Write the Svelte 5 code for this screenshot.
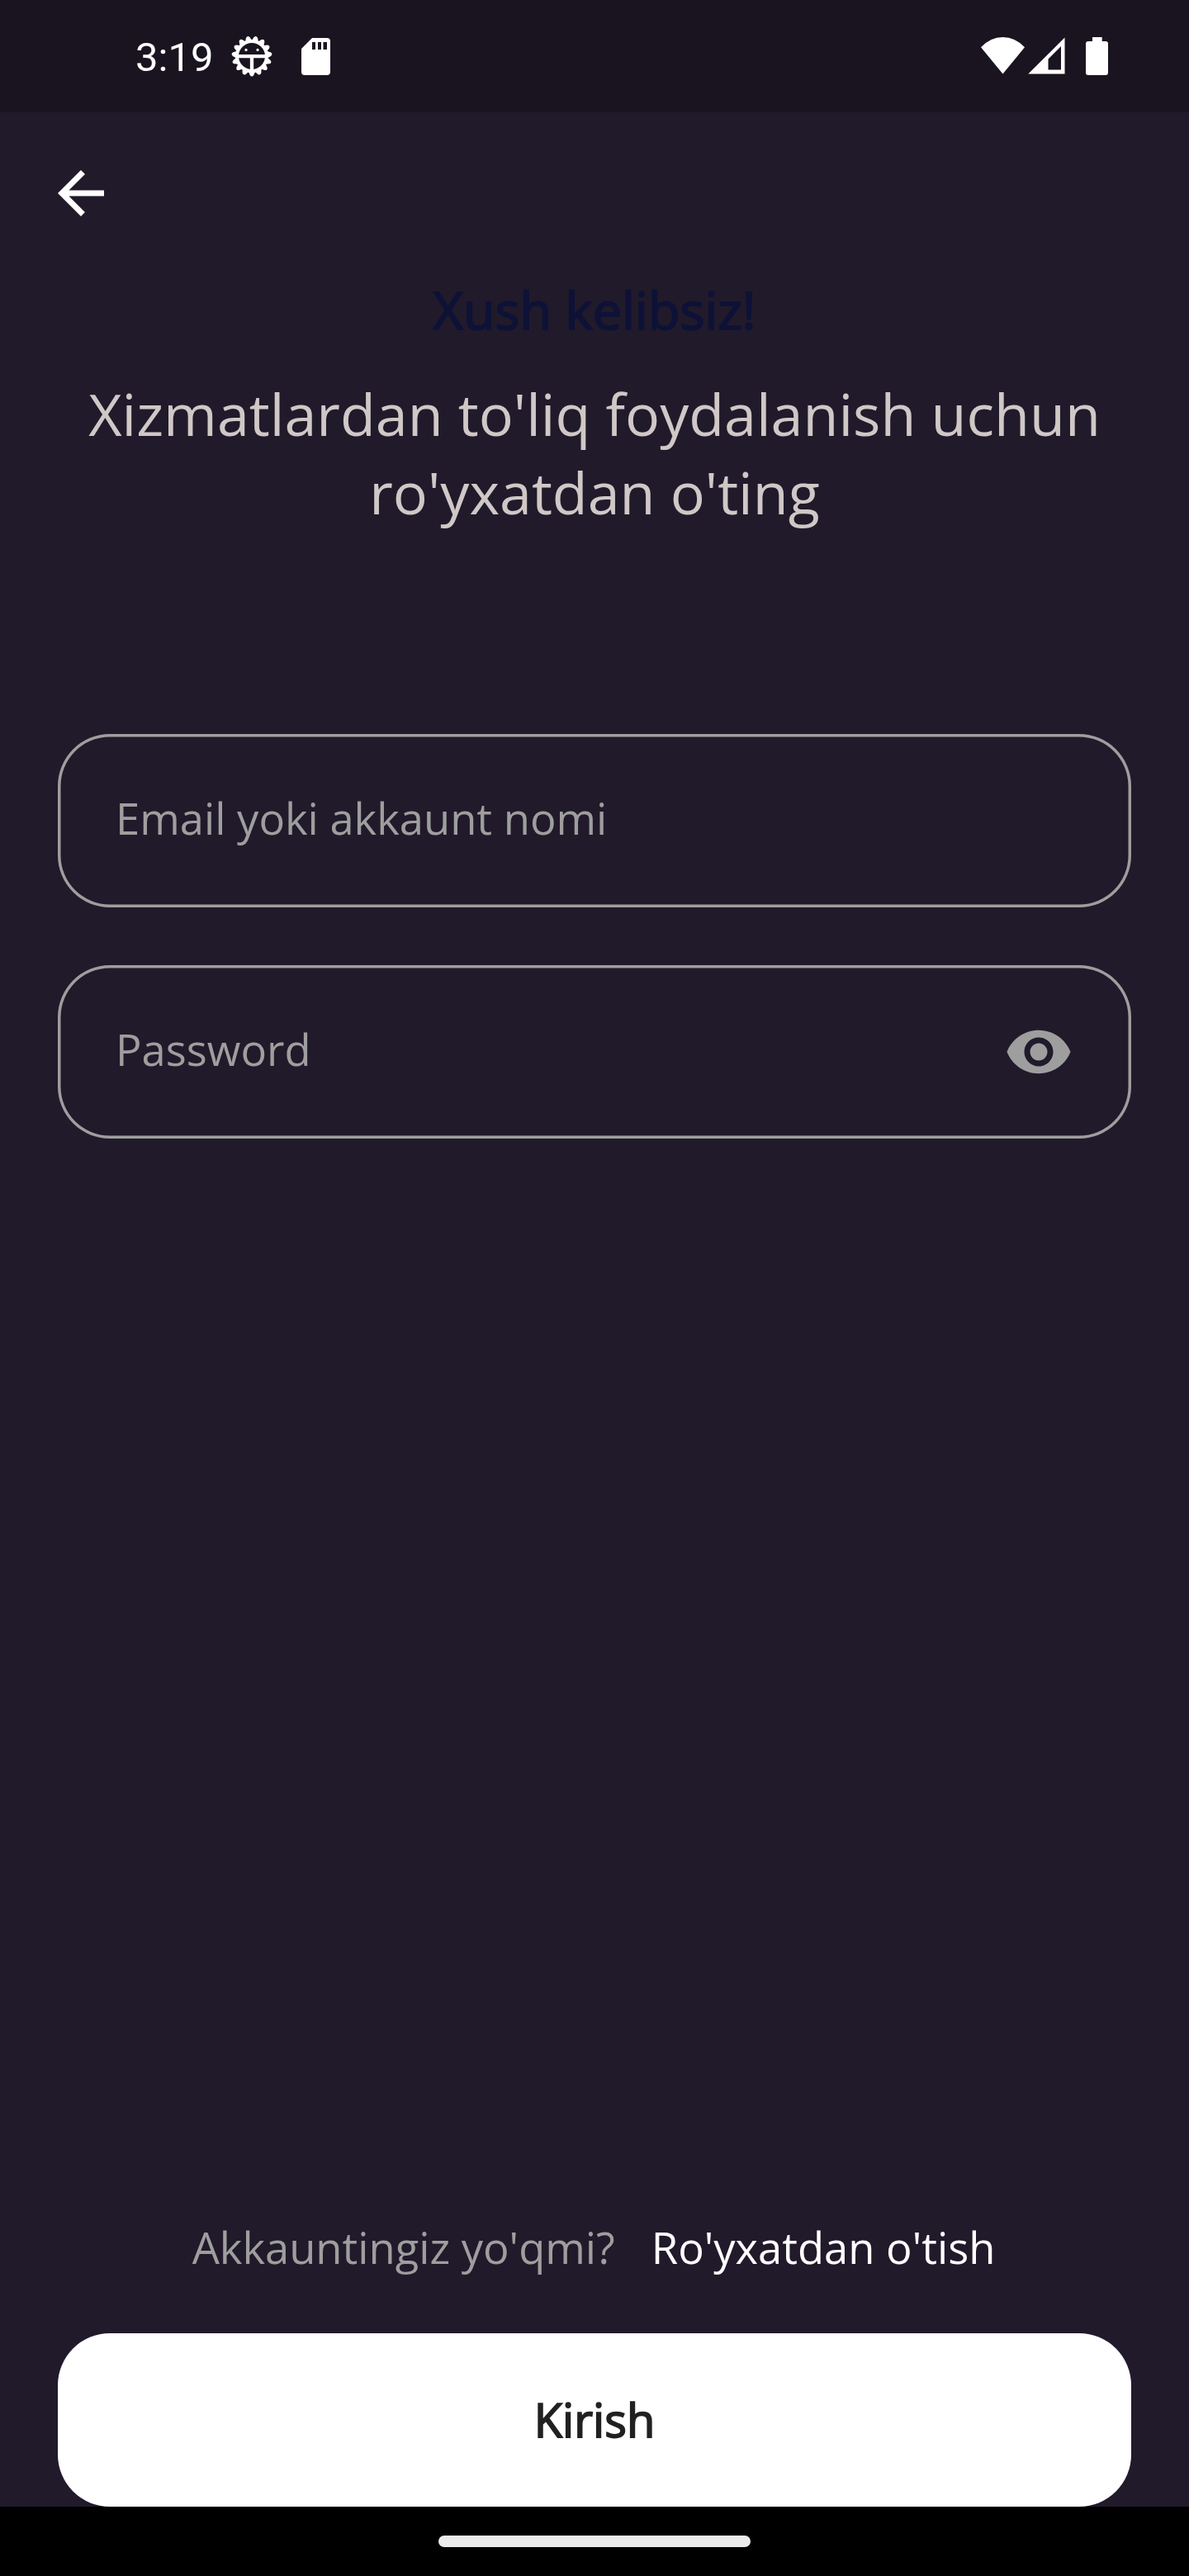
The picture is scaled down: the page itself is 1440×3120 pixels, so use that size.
<script>
  let login = $state('');
  let password = $state('');

  // Fifteen rounded teeth spread evenly round the gear, one pointing straight down
  const teeth = Array.from({ length: 15 }, (_, i) => 180 + i * 24);
</script>

<div class="screen">
  <header class="status">
    <div class="status-left">
      <span class="clock">3:19</span>
      <svg class="gear" viewBox="-25 -25 50 50">
        {#each teeth as angle}
          <path d="M-4.400-18 L-2.300-23 Q0-26 2.300-23 L4.400-18Z" fill="#fff" transform="rotate({angle})" />
        {/each}
        <circle r="18" fill="none" stroke="#fff" stroke-width="4" />
        <path d="M-17 .2H17M0 0V17" fill="none" stroke="#fff" stroke-width="4.300" />
        <circle cx="-7" cy="-7.600" r="1.600" fill="#fff" />
        <circle cx="7" cy="-7.600" r="1.600" fill="#fff" />
      </svg>
      <svg class="sd" viewBox="0 0 35 45">
        <path fill="#fff" fill-rule="evenodd" d="M13 0H31Q35 0 35 4V41Q35 45 31 45H4Q0 45 0 41V13ZM13 5V14H17V5ZM20 5V14H24V5ZM26.500 5V14H31V5Z" />
      </svg>
    </div>
    <div class="status-right">
      <svg class="wifi" viewBox="0 0 53 45"><path fill="#fff" d="M0 12.300Q11.500 0 26.500 0T53 12.300L26.500 44.500Z" /></svg>
      <svg class="signal" viewBox="0 0 45 45"><path fill="#fff" fill-rule="evenodd" d="M44.500 .5V44.500H.3ZM40 11L24.500 26.500V39.500H40Z" /></svg>
      <svg class="battery" viewBox="0 0 27 46"><path fill="#fff" d="M8 0H19.700V5H24Q27 5 27 8V43Q27 46 24 46H3Q0 46 0 43V8Q0 5 3 5H8Z" /></svg>
    </div>
  </header>

  <nav class="toolbar">
    <button class="icon-button" aria-label="Orqaga">
      <svg viewBox="0 0 24 24"><path fill="#fff" d="M20 11H7.830l5.590-5.590L12 4l-8 8 8 8 1.410-1.410L7.830 13H20v-2z" /></svg>
    </button>
  </nav>

  <main>
    <h1>Xush kelibsiz!</h1>
    <p class="subtitle">Xizmatlardan to'liq foydalanish uchun ro'yxatdan o'ting</p>

    <form>
      <label class="field">
        <input type="text" placeholder="Email yoki akkaunt nomi" bind:value={login} />
      </label>
      <label class="field">
        <input type="password" placeholder="Password" bind:value={password} />
        <svg class="eye" viewBox="0 0 24 24">
          <path fill="#9e9e9e" d="M12 4.500C7 4.500 2.730 7.610 1 12c1.730 4.390 6 7.500 11 7.500s9.270-3.110 11-7.500c-1.730-4.390-6-7.500-11-7.500zM12 17c-2.760 0-5-2.240-5-5s2.240-5 5-5 5 2.240 5 5-2.240 5-5 5zm0-8c-1.660 0-3 1.340-3 3s1.340 3 3 3 3-1.340 3-3-1.340-3-3-3z" />
        </svg>
      </label>
    </form>

    <div class="actions">
      <div class="signup">
        <span>Akkauntingiz yo'qmi?</span>
        <a href="#signup">Ro'yxatdan o'tish</a>
      </div>
      <button class="submit">Kirish</button>
    </div>
  </main>

  <footer class="gesture-bar"><div class="pill"></div></footer>
</div>

<style>
  :global(body) {
    margin: 0;
    background: #211a2b;
  }
  .screen {
    box-sizing: border-box;
    width: 1440px;
    height: 3120px;
    display: flex;
    flex-direction: column;
    background: #211a2b;
    font-family: 'Open Sans', 'Noto Sans', sans-serif;
    overflow: hidden;
  }
  svg {
    display: block;
    flex: none;
  }
  button {
    border: 0;
    padding: 0;
    font: inherit;
  }
  .status {
    box-sizing: border-box;
    height: 136px;
    flex: none;
    display: flex;
    justify-content: space-between;
    align-items: flex-start;
    padding: 43px 98px 0 164px;
    background: #1a1420;
  }
  .status-left,
  .status-right {
    display: flex;
    align-items: flex-start;
  }
  .clock {
    width: 116px;
    padding-top: 1px;
    font: 49px/52px Roboto, sans-serif;
    color: #fff;
    white-space: nowrap;
  }
  .gear {
    width: 50px;
    height: 50px;
  }
  .sd {
    width: 35px;
    height: 45px;
    margin: 3px 0 0 35px;
  }
  .wifi {
    width: 53px;
    height: 45px;
    margin-top: 2px;
  }
  .signal {
    width: 45px;
    height: 45px;
    margin: 2px 25px 0 4px;
  }
  .battery {
    width: 27px;
    height: 46px;
    margin-top: 2px;
  }
  .toolbar {
    box-sizing: border-box;
    height: 196px;
    flex: none;
    display: flex;
    align-items: center;
    padding-left: 56px;
  }
  .icon-button {
    width: 84px;
    height: 84px;
    background: none;
  }
  main {
    flex: 1;
    display: flex;
    flex-direction: column;
    padding: 0 70px;
  }
  h1 {
    margin: 0;
    font-size: 63px;
    line-height: 86px;
    font-weight: 400;
    text-align: center;
    color: #0e1237;
    -webkit-text-stroke: 2px #0e1237;
  }
  .subtitle {
    margin: 36px 0 0;
    font-size: 70px;
    line-height: 95px;
    text-align: center;
    color: #d0c8c6;
  }
  form {
    display: flex;
    flex-direction: column;
    gap: 70px;
    margin-top: 244.500px;
  }
  .field {
    box-sizing: border-box;
    height: 210px;
    display: flex;
    align-items: center;
    padding: 0 70px;
    border-radius: 63px;
    box-shadow: inset 0 0 0 3.500px #9e9e9e;
  }
  input {
    flex: 1;
    min-width: 0;
    height: 72px;
    margin: 0 0 6px;
    padding: 0;
    border: 0;
    outline: 0;
    background: none;
    font: 52.500px/72px 'Open Sans', 'Noto Sans', sans-serif;
    color: #fff;
  }
  input::placeholder {
    color: #9e9e9e;
    opacity: 1;
  }
  .eye {
    width: 84px;
    height: 84px;
  }
  .actions {
    display: flex;
    flex-direction: column;
    gap: 69px;
    margin-top: auto;
  }
  .signup {
    display: flex;
    justify-content: center;
    gap: 44px;
    padding-right: 2px;
    font-size: 52.500px;
    line-height: 71px;
    color: #9e9e9e;
    white-space: nowrap;
  }
  .signup a {
    color: #fff;
    text-decoration: none;
  }
  .submit {
    height: 210px;
    padding-bottom: 2px;
    border-radius: 63px;
    background: #fff;
    font-size: 56px;
    line-height: 76px;
    color: #212121;
    -webkit-text-stroke: 1.750px #212121;
  }
  .gesture-bar {
    height: 84px;
    flex: none;
    display: flex;
    align-items: center;
    justify-content: center;
    background: #000;
  }
  .pill {
    width: 378px;
    height: 14px;
    border-radius: 7px;
    background: #ebebeb;
  }
</style>
